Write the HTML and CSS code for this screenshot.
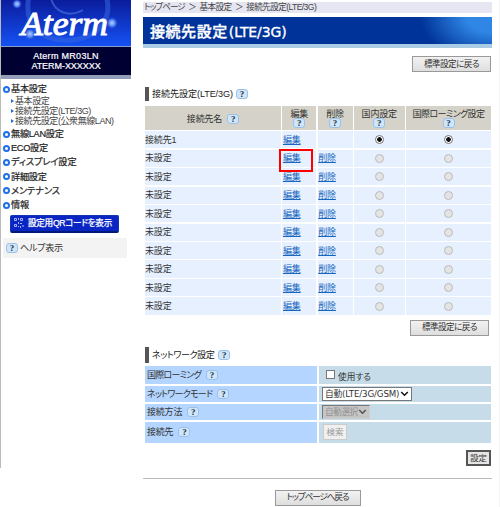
FILE: index.html
```
<!DOCTYPE html>
<html lang="ja">
<head>
<meta charset="utf-8">
<title>接続先設定(LTE/3G)</title>
<link rel="stylesheet" href="styles.css">
</head>
<body>
<aside class="side">
  <svg class="logo" width="130" height="46" viewBox="0 0 130 46">
    <defs>
      <linearGradient id="sky" x1="0" y1="0" x2="0" y2="1"><stop offset="0" stop-color="#0a1c9c"/><stop offset="1" stop-color="#1552f4"/></linearGradient>
      <radialGradient id="orb"><stop offset="0" stop-color="#b4ceff"/><stop offset=".5" stop-color="#5e8cf5"/><stop offset="1" stop-color="#2452dc" stop-opacity="0"/></radialGradient>
    </defs>
    <rect width="130" height="46" fill="url(#sky)"/>
    <path d="M28 -4C22 26 40 42 70 40C98 38 112 18 105 -4" fill="none" stroke="#3766e0" stroke-width="5" opacity=".55"/>
    <path d="M50 -2C53 12 68 18 82 10" fill="none" stroke="#5d83ea" stroke-width="2" opacity=".5"/>
    <circle cx="16" cy="4" r="5" fill="url(#orb)"/><circle cx="111" cy="23" r="6" fill="url(#orb)"/><circle cx="29" cy="34" r="6" fill="url(#orb)"/>
    <text x="20" y="35" textLength="87" lengthAdjust="spacingAndGlyphs" class="logo-text">Aterm</text>
  </svg>
  <div class="model"><span>Aterm MR03LN</span><span class="id">ATERM-XXXXXX</span></div>
  <nav class="menu">
    <div class="top">基本設定</div>
    <div class="sub">基本設定</div>
    <div class="sub">接続先設定(LTE/3G)</div>
    <div class="sub">接続先設定(公衆無線LAN)</div>
    <div class="top first">無線LAN設定</div>
    <div class="top">ECO設定</div>
    <div class="top kana">ディスプレイ設定</div>
    <div class="top">詳細設定</div>
    <div class="top kana">メンテナンス</div>
    <div class="top">情報</div>
  </nav>
  <div class="qr">
    <svg width="10" height="10" viewBox="0 0 10 10" fill="none" stroke="#c9d6ff"><path d="M.5.5h2v2h-2zM6.5.5h2v2h-2zM.5 6.5h2v2h-2zM4.5 0v2M4.5 4v2M6 5.5h2M6.5 8v2M9 7v2M4 8.5h1" stroke-width=".8"/></svg>
    <span>設定用QRコードを表示</span>
  </div>
  <div class="help"><i class="q">?</i><span>ヘルプ表示</span></div>
</aside>
<main>
  <div class="crumbs"><span>トップページ</span><span>＞</span><span>基本設定</span><span>＞</span><span>接続先設定(LTE/3G)</span></div>
  <h1>接続先設定<span>(LTE/3G)</span></h1>
  <div class="actions one"><button class="std">標準設定に戻る</button></div>
  <h2><span>接続先設定(LTE/3G)</span><i class="q">?</i></h2>
  <div class="grid" id="list">
    <div class="th wide">接続先名<i class="q">?</i></div>
    <div class="th">編集<i class="q">?</i></div>
    <div class="th">削除<i class="q">?</i></div>
    <div class="th">国内設定<i class="q">?</i></div>
    <div class="th roam">国際ローミング設定<i class="q">?</i></div>
    <div>接続先1</div><div><a>編集</a></div><div></div><div class="c"><b class="radio on"></b></div><div class="c"><b class="radio on"></b></div>
    <div>未設定</div><div class="marked"><a>編集</a></div><div><a>削除</a></div><div class="c"><b class="radio"></b></div><div class="c"><b class="radio"></b></div>
    <div>未設定</div><div><a>編集</a></div><div><a>削除</a></div><div class="c"><b class="radio"></b></div><div class="c"><b class="radio"></b></div>
    <div>未設定</div><div><a>編集</a></div><div><a>削除</a></div><div class="c"><b class="radio"></b></div><div class="c"><b class="radio"></b></div>
    <div>未設定</div><div><a>編集</a></div><div><a>削除</a></div><div class="c"><b class="radio"></b></div><div class="c"><b class="radio"></b></div>
    <div>未設定</div><div><a>編集</a></div><div><a>削除</a></div><div class="c"><b class="radio"></b></div><div class="c"><b class="radio"></b></div>
    <div>未設定</div><div><a>編集</a></div><div><a>削除</a></div><div class="c"><b class="radio"></b></div><div class="c"><b class="radio"></b></div>
    <div>未設定</div><div><a>編集</a></div><div><a>削除</a></div><div class="c"><b class="radio"></b></div><div class="c"><b class="radio"></b></div>
    <div>未設定</div><div><a>編集</a></div><div><a>削除</a></div><div class="c"><b class="radio"></b></div><div class="c"><b class="radio"></b></div>
    <div>未設定</div><div><a>編集</a></div><div><a>削除</a></div><div class="c"><b class="radio"></b></div><div class="c"><b class="radio"></b></div>
  </div>
  <div class="actions two"><button class="std">標準設定に戻る</button></div>
  <h2 class="net"><span>ネットワーク設定</span><i class="q">?</i></h2>
  <div class="form">
    <div class="label kana">国際ローミング<i class="q">?</i></div><div class="value"><b class="check"></b><span class="use">使用する</span></div>
    <div class="label kana">ネットワークモード<i class="q">?</i></div><div class="value"><div class="select mode"><span>自動(LTE/3G/GSM)</span><svg width="9" height="6" viewBox="0 0 9 6"><path d="M1.2 1l3.3 3.3L7.8 1"/></svg></div></div>
    <div class="label">接続方法<i class="q">?</i></div><div class="value"><div class="select off"><span>自動選択</span><svg width="9" height="6" viewBox="0 0 9 6"><path d="M1.2 1l3.3 3.3L7.8 1"/></svg></div></div>
    <div class="label">接続先<i class="q">?</i></div><div class="value"><button class="search" disabled>検索</button></div>
  </div>
  <div class="actions three"><button class="apply">設定</button></div>
  <hr>
  <div class="bottom"><button class="home">トップページへ戻る</button></div>
</main>
</body>
</html>
```
FILE: styles.css
```
*, *::before, *::after { box-sizing: border-box; }
body {
  margin: 0; width: 500px; height: 507px; overflow: hidden;
  display: flex; align-items: flex-start; background: #fff;
  border-right: 1px solid #f4f4f4;
  font: 9px/10px "Liberation Sans", "Noto Sans CJK JP", sans-serif;
  font-feature-settings: "palt"; color: #333; white-space: nowrap;
}
button { font: inherit; color: inherit; padding: 0; font-feature-settings: inherit; letter-spacing: inherit; white-space: nowrap; }
.side { width: 131px; height: 468px; border-left: 1px solid #bbb; flex: none; }
.logo { display: block; }
.logo-text { font: italic 34px "Liberation Serif", serif; fill: #fff; stroke: #fff; stroke-width: 1; }
.model {
  height: 33px; padding-top: 5px; background: #000033; border-top: 1px solid #8a9cc8; border-bottom: 4px solid #929db8;
  color: #fff; display: flex; flex-direction: column; align-items: center;
  font-size: 9px; line-height: 9.5px; letter-spacing: .3px; -webkit-text-stroke: .2px #fff;
}
.id { letter-spacing: -.05px; }
.menu { padding-top: 3px; color: #222; }
.menu div { display: flex; align-items: center; }
.top { height: 14.2px; padding-left: 2px; font-size: 9.2px; letter-spacing: -.3px; -webkit-text-stroke: .2px #222; }
.top.first { margin-top: 1.4px; }
.top.kana { letter-spacing: -.1px; }
.top::before { content: ""; width: 7px; height: 7px; border: 2.4px solid #1e70e8; border-radius: 50%; margin-right: 1px; flex: none; }
.sub { height: 9.8px; padding-left: 10px; font-size: 9px; letter-spacing: -.42px; color: #444; }
.sub::before { content: ""; border: 2px solid transparent; border-left: 3px solid #1e70d8; border-right: 0; margin-right: 1px; }
.qr {
  width: 109px; height: 18px; margin: 2.6px 0 0 9px; border: 1px solid #1436b0; border-bottom: 2px solid #001a78; border-radius: 2px;
  background: #0926c4; color: #fff; display: flex; align-items: center; padding-left: 3px; gap: 4px;
  font-size: 8.6px; letter-spacing: -.3px; -webkit-text-stroke: .25px #fff;
}
.help { width: 124px; height: 20px; margin: 5px 0 0 2px; background: #f3f3f3; display: flex; align-items: center; padding-left: 3px; gap: 2px; font-size: 9.2px; letter-spacing: -.4px; }
.q {
  display: inline-flex; align-items: center; justify-content: center; flex: none; width: 12px; height: 10px;
  background: #cfe5fa; border: 1px solid #9cc1e6; border-radius: 3px;
  font: bold 9px/8px "Liberation Serif", serif; color: #234; -webkit-text-stroke: 0; letter-spacing: 0;
}
main { width: 349px; margin-left: 12px; padding-top: 2px; flex: none; }
.crumbs { height: 11px; background: #e6e6f2; padding-left: 1px; font-size: 8.6px; line-height: 11px; letter-spacing: -.6px; color: #444; display: flex; gap: 3.4px; }
.crumbs span:first-child { letter-spacing: -1px; }
h1 {
  margin: 4px 0 0; height: 31px; padding-left: 7px; border-bottom: 4px solid #a9cbe4; color: #fff;
  background: radial-gradient(ellipse 72px 45px at 100% 0, #2f86e4 0, #2f86e4 35%, #003399 100%) #003399;
  font: 500 15px/28px "Noto Sans CJK JP", sans-serif; letter-spacing: .55px; -webkit-text-stroke: .35px #fff;
}
h1 span { font: 14px/28px "DejaVu Sans", sans-serif; letter-spacing: -.1px; margin-left: 1px; }
.actions { display: flex; justify-content: flex-end; }
.one { margin-top: 8px; padding-right: 1px; }
.two { margin-top: 5px; padding-right: 3px; }
.three { margin-top: 7px; padding-right: 1px; }
.std, .home { width: 79px; height: 16px; border: 1px solid #999; background: linear-gradient(#f2f2f2, #dedede); font-size: 8.6px; line-height: 13px; }
.one .std, .two .std { letter-spacing: -.55px; }
h2 { margin: 15px 0 5px 2px; height: 14px; border-left: 4px solid #555; padding-left: 3px; display: flex; align-items: center; gap: 3px; font-size: 9.1px; font-weight: normal; letter-spacing: -.1px; color: #222; }
.net { margin: 11px 0 3px 2px; height: 16px; letter-spacing: -.5px; gap: 4px; }
.grid { margin-left: 2px; width: 346px; display: grid; grid-template-columns: 136px 34px 35px 51px 85px; column-gap: 1.25px; grid-template-rows: 24px repeat(10, 17.4px); row-gap: 1.1px; }
.grid > div { background: #e6f0ff; display: flex; align-items: center; color: #333; letter-spacing: -.15px; }
.grid > .th { background: #d5d3c9; flex-direction: column; justify-content: center; line-height: 10px; gap: 0; padding-top: 1px; }
.grid > .th:not(.wide) .q { margin-top: -1px; }
.grid > .th.roam { letter-spacing: -.6px; }
.grid > .th.wide { flex-direction: row; gap: 5px; }
.grid a { color: #1766c0; text-decoration: underline; margin-left: .7px; }
.grid > .c { justify-content: center; }
.marked { position: relative; }
.marked::after { content: ""; position: absolute; left: -3.2px; top: -1px; width: 34px; height: 23px; border: 2px solid #f00; z-index: 1; }
.radio { width: 9px; height: 9px; border: 1px solid #bbb; border-radius: 50%; background: #e4e4e4; }
.radio.on { border-color: #777; background: radial-gradient(circle, #111 2px, #fff 2.6px); }
.form { margin-left: 2px; display: grid; grid-template-columns: 172px 172px; grid-template-rows: 18px 16px 16px 21px; gap: 2px; }
.label { background: #b3d5ff; padding-left: 2px; display: flex; align-items: center; gap: 5px; letter-spacing: -.2px; }
.label.kana { letter-spacing: -.75px; }
.value { background: #c6dce9; padding-left: 3px; display: flex; align-items: center; }
.check { width: 9px; height: 9px; margin: 0 3px 0 4px; background: #fff; border: 1px solid #777; }
.use { font-size: 8.7px; padding-top: 4px; letter-spacing: 0; }
.select { display: flex; align-items: center; justify-content: space-between; height: 14px; padding: 0 2px; border: 1px solid #777; background: #fff; }
.select svg { fill: none; stroke: #111; stroke-width: 1.5; flex: none; }
.mode { width: 90px; font: 8.7px/10px "DejaVu Sans", "Noto Sans CJK JP", sans-serif; letter-spacing: -.15px; }
.off { width: 48px; background: #c6c6c6; color: #929292; border-color: #777 #ccc #ccc #777; letter-spacing: -.4px; font-size: 8.6px; }
.off svg { stroke: #555; }
.search { width: 24px; height: 16px; margin-left: 1px; border: 1px solid #ccc; background: #f0f0f0; color: #999; font-size: 8.5px; }
.apply { width: 25px; height: 16px; border: 2px solid #555; background: #e5e5e5; font-size: 8.4px; }
hr { margin: 12px 0 0; border: 0; height: 1px; background: #bbb; }
.bottom { display: flex; justify-content: center; margin-top: 11px; }
.home { width: 86px; height: 16px; font-size: 8.6px; letter-spacing: -1.1px; }
```
